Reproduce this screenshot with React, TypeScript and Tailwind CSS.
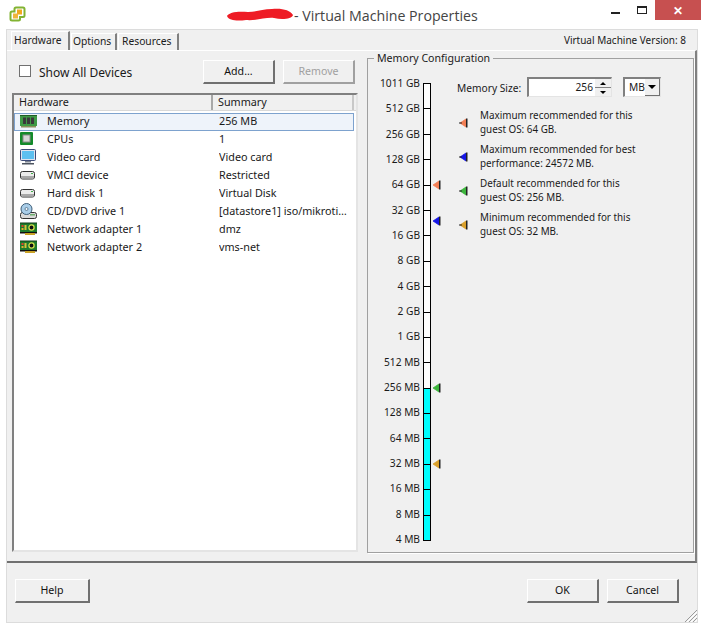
const TICKS = ["1011 GB", "512 GB", "256 GB", "128 GB", "64 GB", "32 GB", "16 GB", "8 GB", "4 GB", "2 GB", "1 GB", "512 MB", "256 MB", "128 MB", "64 MB", "32 MB", "16 MB", "8 MB", "4 MB"];

function Arrow({ color, tip, className = "" }: { color: string; tip?: boolean; className?: string }) {
  return (
    <svg width="9" height="10" viewBox="0 0 9 10" className={className}>
      <path d="M1 5 L7 1 V9 Z" fill={color} stroke={color} strokeWidth="0.8" />
      {tip && <rect x="0" y="4.5" width="3" height="1" fill="#222" />}
      <rect x="7" y="0.5" width="1.5" height="9" fill="#222" />
    </svg>
  );
}

function MemoryIcon() {
  return (
    <svg width="17" height="14" viewBox="0 0 17 14">
      <rect x="0" y="1" width="17" height="11" fill="#3f9a45" />
      <rect x="0" y="1" width="17" height="1" fill="#1f5c25" />
      <rect x="3" y="3.5" width="3" height="6.5" fill="#3a3a3a" />
      <rect x="7" y="3.5" width="3" height="6.5" fill="#3a3a3a" />
      <rect x="11" y="3.5" width="3" height="6.5" fill="#3a3a3a" />
      <rect x="1" y="12" width="15" height="1.5" fill="#8a8f5a" />
    </svg>
  );
}

function CpuIcon() {
  return (
    <svg width="13" height="13" viewBox="0 0 13 13">
      <rect x="0" y="0" width="13" height="13" rx="1" fill="#128a2a" />
      <rect x="3" y="3" width="7" height="7" fill="#d4d6d6" stroke="#8a8a8a" />
    </svg>
  );
}

function MonitorIcon() {
  return (
    <svg width="16" height="16" viewBox="0 0 16 16">
      <rect x="0.5" y="0.5" width="15" height="11" rx="1" fill="#dfe4ee" stroke="#3c4a78" />
      <rect x="2" y="2" width="12" height="8" fill="#5cc0f0" />
      <rect x="5" y="12" width="6" height="1.5" fill="#7a8290" />
      <rect x="2" y="14" width="12" height="1.5" fill="#4d5560" />
    </svg>
  );
}

function DiskIcon() {
  return (
    <svg width="15" height="10" viewBox="0 0 15 10">
      <rect x="0.5" y="1.5" width="14" height="7.5" rx="2" fill="#ececec" stroke="#333" />
      <rect x="1" y="6" width="13" height="2.5" fill="#a8a8a8" />
      <rect x="11" y="3" width="2" height="1" fill="#3fae49" />
    </svg>
  );
}

function CdIcon() {
  return (
    <svg width="17" height="16" viewBox="0 0 17 16">
      <rect x="0.5" y="9.5" width="16" height="6" rx="2" fill="#d9d9d9" stroke="#333" />
      <rect x="10" y="11" width="5" height="1.5" fill="#6fae6f" />
      <circle cx="6.5" cy="6" r="5.5" fill="#a9cde8" stroke="#3f5f7a" />
      <circle cx="6.5" cy="6" r="1.5" fill="#f4f8fb" stroke="#3f5f7a" strokeWidth="0.7" />
    </svg>
  );
}

function NicIcon() {
  return (
    <svg width="17" height="14" viewBox="0 0 17 14">
      <rect x="0" y="1" width="17" height="9" fill="#1d7a2c" />
      <rect x="0" y="0.5" width="17" height="1" fill="#123d18" />
      <rect x="1.5" y="3" width="2" height="2" fill="#e2402e" />
      <rect x="1.5" y="6" width="2" height="2" fill="#e2b02e" />
      <rect x="4.5" y="3" width="2" height="5" fill="#d8c13a" />
      <circle cx="11.5" cy="5.5" r="2.6" fill="#111" stroke="#cfe04a" strokeWidth="1.3" />
      <rect x="0" y="10" width="17" height="1.5" fill="#111" />
      <rect x="5" y="11" width="10" height="2" fill="#c9a227" />
    </svg>
  );
}

function ClassicButton({ label, wide, disabled }: { label: string; wide?: boolean; disabled?: boolean }) {
  return (
    <button
      className={`h-[24px] text-[10.6px] flex items-center justify-center border-t border-l border-white border-r-2 border-b-2 bg-[#f0f0f0] ${wide ? "w-[75px]" : "w-[72px]"} ${disabled ? "border-r-[#a0a0a0] border-b-[#a0a0a0] text-[#a0a0a0]" : "border-r-[#707070] border-b-[#707070] text-[#111]"}`}
    >
      {label}
    </button>
  );
}

const ROWS = [
  { icon: <MemoryIcon />, name: "Memory", summary: "256 MB" },
  { icon: <CpuIcon />, name: "CPUs", summary: "1" },
  { icon: <MonitorIcon />, name: "Video card", summary: "Video card" },
  { icon: <DiskIcon />, name: "VMCI device", summary: "Restricted" },
  { icon: <DiskIcon />, name: "Hard disk 1", summary: "Virtual Disk" },
  { icon: <CdIcon />, name: "CD/DVD drive 1", summary: "[datastore1] iso/mikroti…" },
  { icon: <NicIcon />, name: "Network adapter 1", summary: "dmz" },
  { icon: <NicIcon />, name: "Network adapter 2", summary: "vms-net" },
];

const LEGEND = [
  { color: "#f27f55", lines: ["Maximum recommended for this", "guest OS: 64 GB."] },
  { color: "#1616e6", lines: ["Maximum recommended for best", "performance: 24572 MB."] },
  { color: "#3cb53c", lines: ["Default recommended for this", "guest OS: 256 MB."] },
  { color: "#d9a02c", lines: ["Minimum recommended for this", "guest OS: 32 MB."] },
];

export default function App() {
  return (
    <div className="w-[703px] h-[628px] bg-white flex flex-col overflow-hidden text-[11px] leading-[13px] text-[#1a1a1a] font-['Noto_Sans',sans-serif]">
      {/* Title bar */}
      <div className="relative h-[29px] shrink-0 flex">
        <svg width="17" height="16" viewBox="0 0 17 16" className="ml-[9px] mt-[6px]">
          <path d="M7 1.5 H14 Q15.5 1.5 15.5 3 V9.5 Q15.5 11 14 11 H11 V13 Q11 14.5 9.5 14.5 H3 Q1.5 14.5 1.5 13 V7 Q1.5 5.5 3 5.5 H5.5 V3 Q5.5 1.5 7 1.5 Z" fill="#fff" stroke="#82b332" strokeWidth="2" />
          <rect x="8" y="3.5" width="5" height="5" fill="#f0a81e" />
          <rect x="4" y="7.5" width="5" height="5" fill="#f0b53a" />
        </svg>
        <svg width="69" height="14" viewBox="0 0 69 14" className="ml-[200px] mt-[8px]">
          <path d="M1 8 C3 4 12 3 22 4 C30 4 36 1 46 1 C56 0 64 2 67 7 C66 11 56 12 48 10 C40 9 30 13 20 12 C12 13 3 13 1 8 Z" fill="#ee1c25" />
        </svg>
        <span className="text-[14.2px] leading-[29px] text-[#444] font-['Open_Sans',sans-serif] -ml-[1px] mt-[1px]">- Virtual Machine Properties</span>
        <div className="absolute left-[611px] top-[12px] w-[9px] h-[2px] bg-[#222]" />
        <div className="absolute left-[637px] top-[6px] w-[10px] h-[8px] border border-[#222] border-t-2" />
        <div className="absolute left-[655px] top-0 w-[46px] h-[20px] bg-[#c75050] flex items-center justify-center text-white text-[12px] font-bold">✕</div>
      </div>

      {/* Dialog body */}
      <div className="relative ml-[6px] w-[692px] h-[594px] bg-[#f0f0f0] border border-[#dcdcdc] flex flex-col">
        {/* Tabs */}
        <div className="h-[20px] pl-[4px] flex items-end text-[10.3px]">
          <div className="h-[19px] w-[59px] pl-[2px] pt-[2px] bg-[#f0f0f0] border-t border-l border-white border-r-2 border-r-[#808080] text-[#222]">Hardware</div>
          <div className="h-[17px] w-[46px] ml-[1px] pl-[1px] pt-[1px] border-t border-l border-white border-r-2 border-r-[#808080]">Options</div>
          <div className="h-[17px] w-[61px] ml-[1px] pl-[3px] pt-[1px] border-t border-l border-white border-r-2 border-r-[#808080]">Resources</div>
          <div className="ml-auto mr-[11px] self-center text-[10px]">Virtual Machine Version: 8</div>
        </div>

        {/* Tab pane */}
        <div className="h-[513px] border-t border-white border-b-2 border-b-[#707070] border-r-2 border-r-[#808080] pl-[5px] flex">
          <div className="w-[346px] flex flex-col">
            <div className="h-[42px] pt-[9px] flex items-start">
              <div className="w-[12px] h-[12px] mt-[5px] ml-[7px] bg-white border border-[#707070]" />
              <span className="ml-[8px] mt-[6px] text-[12px]">Show All Devices</span>
              <div className="ml-auto mr-[3px] flex gap-[8px]">
                <ClassicButton label="Add..." />
                <ClassicButton label="Remove" disabled />
              </div>
            </div>
            {/* Hardware table */}
            <div className="h-[459px] bg-white border-t-2 border-l-2 border-[#808080] border-r-2 border-r-[#e4e4e4] border-b-2 border-b-[#e4e4e4] text-[10.8px]">
              <div className="h-[16px] flex bg-[#f0f0f0] border-b border-[#d8d8d8]">
                <div className="w-[199px] pl-[5px] border-r-2 border-[#a8a8a8]">Hardware</div>
                <div className="w-[141px] pl-[5px] border-r-2 border-[#c8c8c8]">Summary</div>
              </div>
              <div className="pt-[2px]">
                {ROWS.map((row, i) => (
                  <div
                    key={row.name}
                    className={`h-[18px] w-[340px] pb-[3px] flex items-center border ${i === 0 ? "bg-[#eef3fa] border-[#7da2ce]" : "border-transparent"}`}
                  >
                    <div className="w-[32px] pl-[5px] flex items-center">{row.icon}</div>
                    <div className="w-[172px]">{row.name}</div>
                    <div className="flex-1 truncate">{row.summary}</div>
                  </div>
                ))}
              </div>
            </div>
          </div>

          {/* Memory configuration */}
          <div className="relative ml-[9px] mt-[7px] w-[327px] h-[495px] border border-[#a0a0a0] shadow-[1px_1px_0_#fff] flex items-start pt-[18px] text-[10.2px]">
            <span className="absolute left-[6px] -top-[7px] px-[3px] bg-[#f0f0f0] text-[10.6px]">Memory Configuration</span>
            <div className="ml-[6px] w-[46px] h-[469px] flex flex-col justify-between text-right">
              {TICKS.map((t) => (
                <div key={t} className="h-[13px] whitespace-nowrap">{t}</div>
              ))}
            </div>
            <div className="relative ml-[3px] mt-[6px] w-[8px] h-[458px] flex flex-col border-x border-b border-black">
              {TICKS.slice(0, -1).map((t, i) => (
                <div key={t} className={`flex-1 border-t border-black ${i >= 12 ? "bg-[#00ffff]" : "bg-white"}`} />
              ))}
              <Arrow color="#f27f55" className="absolute left-[8px] top-[97px]" />
              <Arrow color="#1616e6" className="absolute left-[8px] top-[133px]" />
              <Arrow color="#3cb53c" className="absolute left-[8px] top-[300px]" />
              <Arrow color="#d9a02c" className="absolute left-[8px] top-[376px]" />
            </div>
            <div className="ml-[26px] flex flex-col">
              <div className="flex items-center h-[20px]">
                <span className="w-[70px] pt-[2px]">Memory Size:</span>
                <div className="w-[85px] h-[20px] flex bg-white border-t-2 border-l-2 border-[#808080] border-r border-b border-r-[#e4e4e4] border-b-[#e4e4e4]">
                  <span className="flex-1 text-right pr-[2px] pt-[2px]">256</span>
                  <div className="w-[16px] flex flex-col bg-[#f0f0f0]">
                    <div className="flex-1 flex items-center justify-center border-b border-[#808080]">
                      <div className="w-0 h-0 border-x-[3px] border-x-transparent border-b-[3px] border-b-black" />
                    </div>
                    <div className="flex-1 flex items-center justify-center">
                      <div className="w-0 h-0 border-x-[3px] border-x-transparent border-t-[3px] border-t-black" />
                    </div>
                  </div>
                </div>
                <div className="ml-[11px] w-[38px] h-[20px] flex bg-white border-t-2 border-l-2 border-[#808080] border-r border-b border-r-[#e4e4e4] border-b-[#e4e4e4]">
                  <span className="flex-1 pl-[4px] pt-[2px]">MB</span>
                  <div className="w-[16px] bg-[#f0f0f0] flex items-center justify-center border-r border-b border-[#707070]">
                    <div className="w-0 h-0 border-x-[4px] border-x-transparent border-t-[4px] border-t-black" />
                  </div>
                </div>
              </div>
              <div className="mt-[12px] flex flex-col gap-[7px] text-[9.85px]">
                {LEGEND.map((item) => (
                  <div key={item.lines[0]} className="flex items-center h-[27px]">
                    <Arrow color={item.color} tip className="ml-[2px]" />
                    <div className="ml-[12px] leading-[13.5px] whitespace-nowrap">
                      <div>{item.lines[0]}</div>
                      <div>{item.lines[1]}</div>
                    </div>
                  </div>
                ))}
              </div>
            </div>
          </div>
        </div>

        {/* Footer buttons */}
        <div className="flex-1 pl-[8px] pr-[18px] pt-[16px] flex items-start">
          <ClassicButton label="Help" wide />
          <div className="ml-auto flex gap-[8px]">
            <ClassicButton label="OK" />
            <ClassicButton label="Cancel" />
          </div>
        </div>
        <svg width="13" height="13" viewBox="0 0 13 13" className="absolute right-0 bottom-0">
          <path d="M13 1 L1 13 M13 5 L5 13 M13 9 L9 13" stroke="#9a9a9a" strokeWidth="1" />
          <path d="M13 3 L3 13 M13 7 L7 13 M13 11 L11 13" stroke="#fff" strokeWidth="1" />
        </svg>
      </div>
    </div>
  );
}
